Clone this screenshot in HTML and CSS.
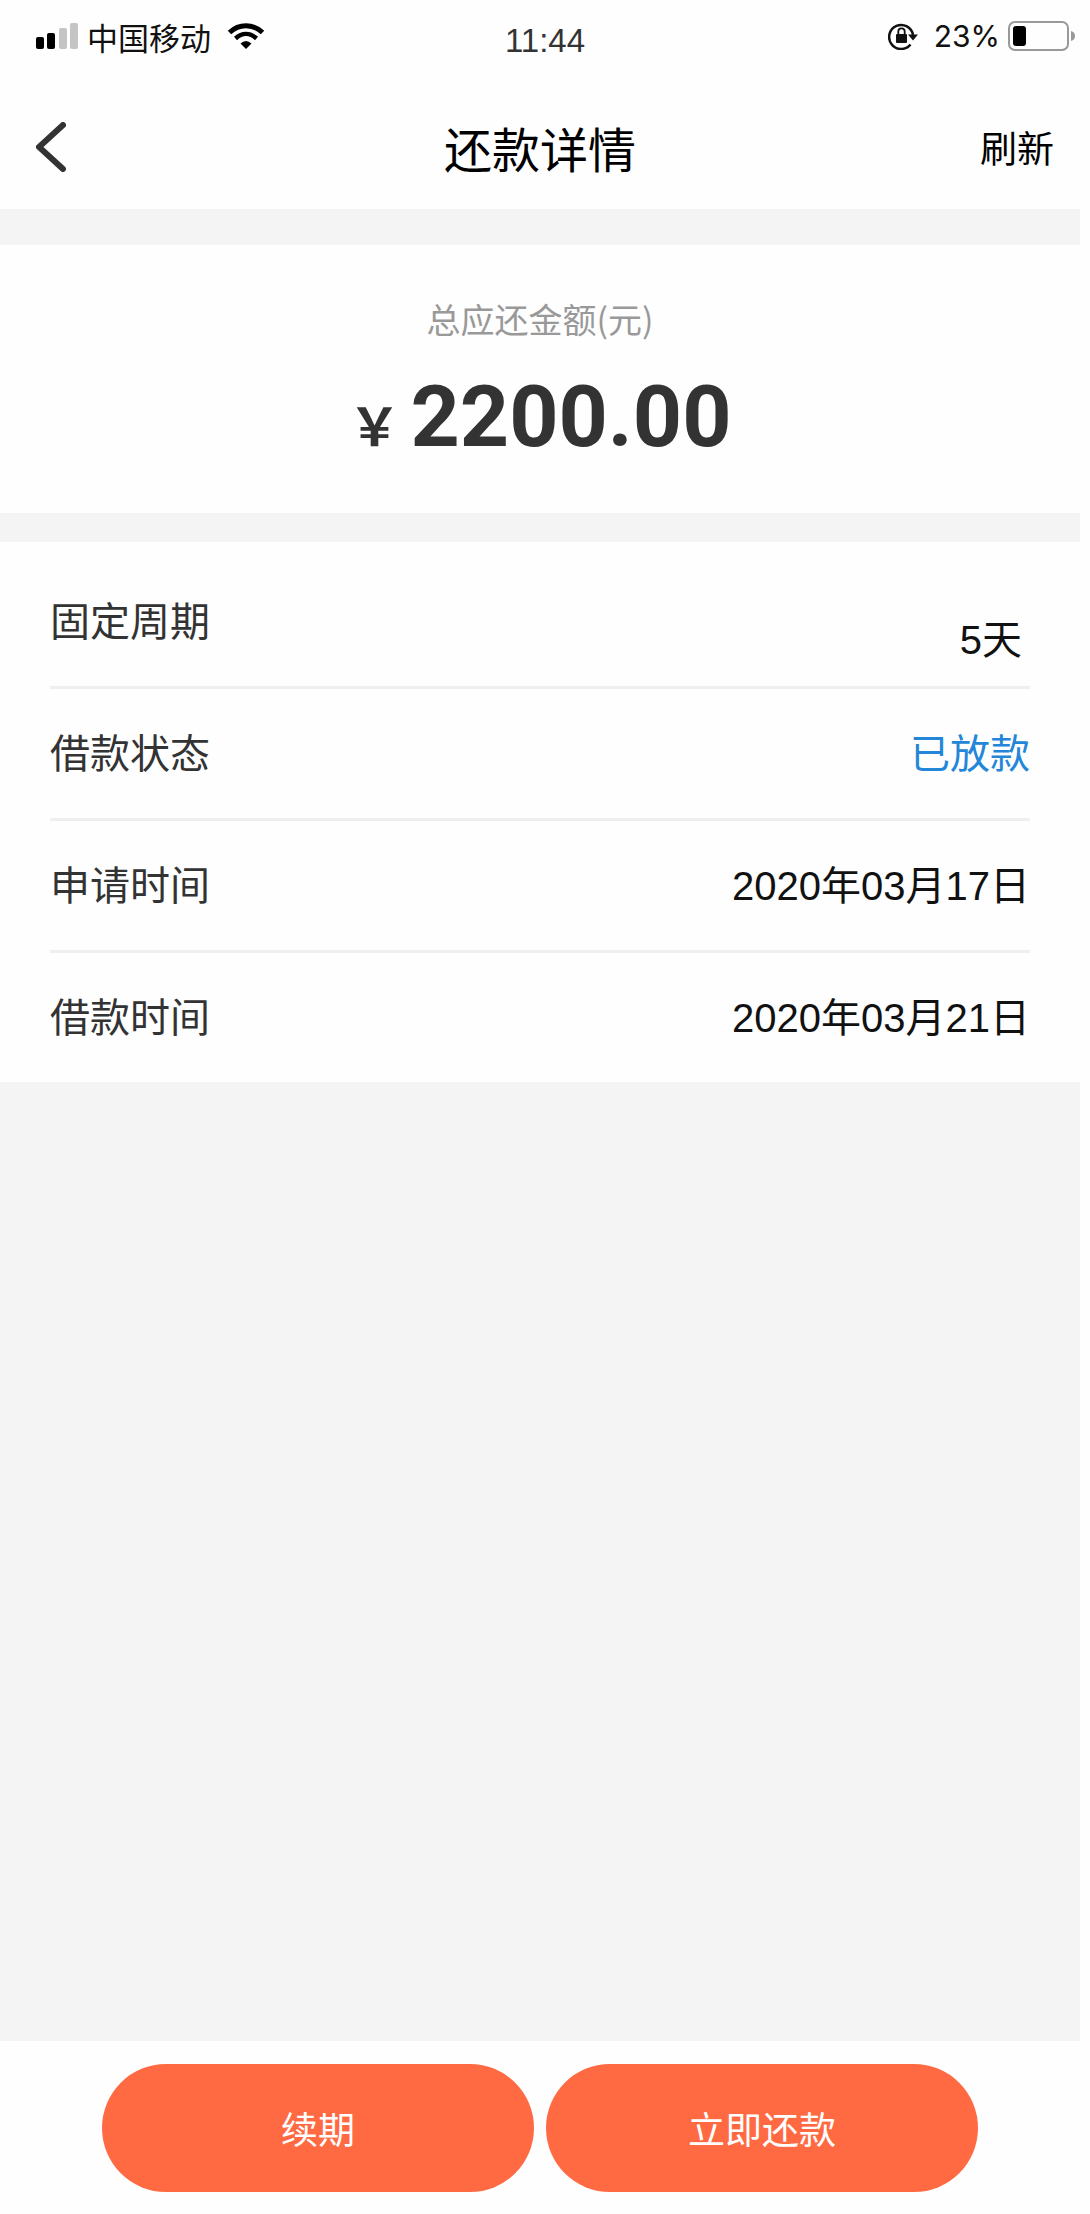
FILE: index.html
```html
<!DOCTYPE html>
<html lang="zh-CN">
<head>
    <meta charset="UTF-8">
    <meta name="viewport" content="width=device-width, initial-scale=1.0">
    <title>还款详情</title>
    <link rel="stylesheet" href="styles.css">
</head>
<body>
    <!-- Status Bar -->
    <div class="status-bar">
        <div class="status-left">
            <svg class="signal" width="42" height="26" viewBox="0 0 42 26">
                <rect x="0" y="14" width="8" height="12" rx="2"/>
                <rect x="11" y="10" width="8" height="16" rx="2"/>
                <rect class="signal-off" x="23" y="5" width="8" height="21" rx="2"/>
                <rect class="signal-off" x="34" y="0" width="8" height="26" rx="2"/>
            </svg>
            <span class="carrier">中国移动</span>
            <svg class="wifi" width="38" height="26" viewBox="0 0 38 26">
                <path d="M2.5 9.5C12 .5 26 .5 35.500 9.500" fill="none" stroke="#000" stroke-width="5"/>
                <path d="M8.500 15.500C15 9.500 23 9.500 29.500 15.500" fill="none" stroke="#000" stroke-width="4.500"/>
                <path d="M13.500 20.500Q19 15.500 24.500 20.500L19 26Z"/>
            </svg>
        </div>
        <span class="time">11:44</span>
        <div class="status-right">
            <svg class="rotation-lock" width="30" height="28" viewBox="0 0 30 28">
                <path d="M22.500 22.500A12 12 0 1 1 25 13" fill="none" stroke="#111" stroke-width="2.500"/>
                <path d="M20 12.500H30L25 18.500Z" fill="#111"/>
                <rect x="8" y="12" width="11" height="9" rx="1" fill="#111"/>
                <path d="M10.300 13V9.500a3.200 3.200 0 0 1 6.400 0V13" fill="none" stroke="#111" stroke-width="1.800"/>
            </svg>
            <span class="percent">23%</span>
            <svg class="battery" width="68" height="30" viewBox="0 0 68 30">
                <rect x="1" y="1" width="59" height="28" rx="6" fill="none" stroke="#999" stroke-width="2"/>
                <rect x="5" y="5" width="13" height="20" rx="3"/>
                <path d="M63 10Q67 11 67 15T63 20Z" fill="#999"/>
            </svg>
        </div>
    </div>

    <div class="container">
        <!-- Header -->
        <header class="header">
            <button type="button" class="back" aria-label="返回">
                <svg width="30" height="50" viewBox="0 0 30 50">
                    <path d="M27 3L3 25L27 47" fill="none" stroke="#333" stroke-width="6" stroke-linecap="round"/>
                </svg>
            </button>
            <h1>还款详情</h1>
            <button type="button" class="refresh">刷新</button>
        </header>

        <!-- Amount Section -->
        <section class="amount">
            <p class="amount-label">总应还金额(元)</p>
            <p class="amount-value"><span class="currency">￥</span>2200.00</p>
        </section>

        <!-- Loan Details -->
        <dl class="details">
            <div class="row">
                <dt>固定周期</dt>
                <dd class="period">5天</dd>
            </div>
            <div class="row">
                <dt>借款状态</dt>
                <dd class="status">已放款</dd>
            </div>
            <div class="row">
                <dt>申请时间</dt>
                <dd>2020年03月17日</dd>
            </div>
            <div class="row">
                <dt>借款时间</dt>
                <dd>2020年03月21日</dd>
            </div>
        </dl>

        <!-- Bottom Buttons -->
        <footer class="actions">
            <button type="button">续期</button>
            <button type="button">立即还款</button>
        </footer>
    </div>
</body>
</html>
```

FILE: styles.css
```css
/* Basic Reset */
* {
    box-sizing: border-box;
    margin: 0;
    padding: 0;
}

body {
    display: flex;
    flex-direction: column;
    min-height: 100vh;
    background-color: #fefefe;
    color: #333;
    font-family: "Liberation Sans", "Noto Sans CJK SC", sans-serif;
}

button {
    border: none;
    background: none;
    font-family: "Noto Sans CJK SC", sans-serif;
    font-size: 37px;
    cursor: pointer;
}

svg {
    display: block;
}

/* Status Bar */
.status-bar {
    display: grid;
    grid-template-columns: 1fr auto 1fr;
    align-items: center;
    height: 72px;
    padding: 12px 14px;
    color: #111;
}

.status-left,
.status-right {
    display: flex;
    align-items: center;
}

.status-left {
    padding-left: 22px;
}

.status-right {
    justify-content: flex-end;
}

.signal-off {
    fill: #c4c4c4;
}

.carrier {
    margin: 0 16px 0 9px;
    font-size: 31px;
}

.time {
    align-self: end;
    color: #333;
    font-size: 33px;
}

.percent {
    margin: 0 8px 0 16px;
    font-family: Inter, sans-serif;
    font-size: 30px;
}

/* Page Container */
.container {
    flex: 1;
    display: flex;
    flex-direction: column;
    margin-right: 10px;
    background-color: #f4f4f4;
}

/* Header */
.header {
    display: grid;
    grid-template-columns: 1fr auto 1fr;
    align-items: center;
    height: 137px;
    padding: 12px 26px 0;
    background-color: #fefefe;
}

.back {
    justify-self: start;
    padding-left: 10px;
}

.header h1 {
    color: #000;
    font-size: 48px;
    font-weight: normal;
}

.refresh {
    justify-self: end;
    color: #000;
}

/* Amount Section */
.amount {
    height: 268px;
    margin: 36px 0 29px;
    padding-top: 50px;
    background-color: #fefefe;
    text-align: center;
}

.amount-label {
    color: #999;
    font-family: "Noto Sans CJK SC", sans-serif;
    font-size: 34px;
    line-height: 48px;
}

.amount-value {
    font-family: Roboto, sans-serif;
    font-size: 86px;
    font-weight: bold;
    line-height: 148px;
}

.currency {
    margin-right: 10px;
    font-family: "Noto Sans CJK SC", sans-serif;
    font-size: 52px;
    line-height: 1;
}

/* Loan Details */
.details {
    padding: 15px 50px 0;
    background-color: #fefefe;
    font-size: 40px;
    line-height: 56px;
}

.row {
    display: flex;
    justify-content: space-between;
    align-items: center;
    height: 132px;
    padding: 18px 0;
    border-bottom: 3px solid #efefef;
}

.row:last-child {
    height: 129px;
    border-bottom: none;
}

.row dd {
    color: #111;
}

.row .period {
    align-self: flex-end;
    padding-right: 8px;
}

.row .status {
    color: #2486d8;
}

/* Bottom Buttons */
.actions {
    display: flex;
    justify-content: center;
    gap: 12px;
    margin-top: auto;
    padding: 23px 0 22px;
    background-color: #fefefe;
}

.actions button {
    width: 40%;
    height: 128px;
    border-radius: 64px;
    background-color: #ff6a42;
    color: #fff;
}
```
